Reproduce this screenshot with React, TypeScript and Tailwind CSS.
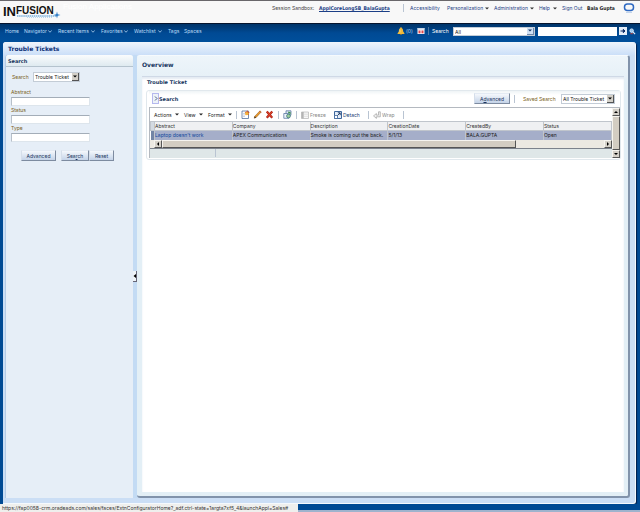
import React from "react";
import clsx from "clsx";

function Caret({ className = "" }: { className?: string }) {
  return (
    <svg viewBox="0 0 4 3" className={clsx("h-[3px] w-1 shrink-0", className)} fill="currentColor" aria-hidden="true">
      <path d="M0 .5h4L2 2.5z" />
    </svg>
  );
}

function Chevron() {
  return (
    <svg viewBox="0 0 4 3" className="h-[3px] w-1 shrink-0" fill="none" stroke="currentColor" aria-hidden="true">
      <path d="M.3.6 2 2.2 3.7.6" strokeWidth=".8" />
    </svg>
  );
}

function GlobalLink({ label, menu, width }: { label: string; menu?: boolean; width: string }) {
  return (
    <a href="#" className={clsx("flex items-center justify-between text-[#1f3f86]", width)}>
      {label}
      {menu && <Caret className="text-[#333]" />}
    </a>
  );
}

function NavLink({ label, menu, width }: { label: string; menu?: boolean; width: string }) {
  return (
    <a href="#" className={clsx("flex items-center justify-between text-[#b9dcf8]", width)}>
      {label}
      {menu && <Chevron />}
    </a>
  );
}

function Divider({ className = "" }: { className?: string }) {
  return <span className={clsx("h-2 w-px shrink-0 bg-[#b9c4d2]", className)} />;
}

function Dropdown({ id, value, width, blue }: { id: string; value: string; width: string; blue?: boolean }) {
  return (
    <span className={clsx("relative flex shrink-0 border border-[#c3ccd6] bg-white", blue ? "h-[9px]" : "h-[10px]", width)}>
      <select id={id} className="w-full appearance-none bg-transparent pl-px text-[5px] leading-[8px] text-[#222] outline-none">
        <option>{value}</option>
      </select>
      <span
        className={clsx(
          "pointer-events-none absolute inset-y-0 right-0 flex w-[7px] items-center justify-center border-r border-b",
          blue ? "border-[#7089ab] bg-[#cfe0f4] text-[#173766]" : "border-[#555] bg-[#d4d0c8] text-black",
        )}
      >
        <Caret />
      </span>
    </span>
  );
}

function PushButton({ children, width }: { children: React.ReactNode; width: string }) {
  return (
    <button
      type="button"
      className={clsx(
        "h-[11px] shrink-0 border border-t-[#e3eaf3] border-r-[#7d8ba0] border-b-[#7d8ba0] border-l-[#d5deea] bg-linear-to-b from-[#f5f8fc] to-[#c4d3e8] text-center leading-[8px] text-[#1c3560]",
        width,
      )}
    >
      {children}
    </button>
  );
}

function Field({ label, id }: { label: string; id: string }) {
  return (
    <div className="flex h-[18px] flex-col">
      <label htmlFor={id} className="h-[9px] leading-[9px] text-[#7a5f1c]">
        {label}
      </label>
      <input id={id} className="h-[9px] w-[79px] border border-[#dde5ec] border-t-[#a3adb8] border-l-[#b7c0ca] bg-white px-px outline-none" />
    </div>
  );
}

function ScrollButton({ path, label }: { path: string; label: string }) {
  return (
    <button type="button" aria-label={label} className="h-2 w-2 shrink-0 border border-[#f6f4ef] border-r-[#555] border-b-[#555] bg-[#d4d0c8]">
      <svg viewBox="0 0 6 6" className="size-full" aria-hidden="true">
        <path d={path} fill="#000" />
      </svg>
    </button>
  );
}

function Logo() {
  return (
    <div className="relative flex h-[17px] w-[58px] items-start font-['Liberation_Sans',sans-serif] font-bold text-[#111]">
      <span className="text-[13px] leading-[16px]">IN</span>
      <span className="text-[10px] leading-[13px]">FUSION</span>
      <svg viewBox="0 0 58 17" className="absolute inset-0 size-full" aria-hidden="true">
        <path d="M14 12h40" stroke="#3f8fd0" strokeDasharray="1.5 .6" />
        <path d="M24 13.5h26" stroke="#9cc8ea" strokeWidth=".7" strokeDasharray="1 1" />
        <path d="M54 7.5l.7 2.800 2.800.7-2.800.7-.7 2.800-.7-2.800-2.800-.7 2.800-.7z" fill="#2477c4" />
      </svg>
    </div>
  );
}

function Bell() {
  return (
    <svg viewBox="0 0 8 8" className="size-2 shrink-0" aria-hidden="true">
      <path d="M4 .3c-.6 0-.9.4-.9.9C2 1.700 1.900 3 1.800 4.400L.6 6.300v.6h6.800v-.6L6.200 4.400C6.100 3 6 1.700 4.900 1.200c0-.5-.3-.9-.9-.9z" fill="#f0b93a" />
      <path d="M3.200 7h1.600v.8H3.200z" fill="#b77a14" />
      <path d="M3 2.500v3" stroke="#fbe29a" strokeWidth=".7" />
    </svg>
  );
}

function Calendar() {
  return (
    <svg viewBox="0 0 8 8" className="size-2 shrink-0" aria-hidden="true">
      <path d="M.5 1h7v6h-7z" fill="#f4f6fa" />
      <path d="M.5 1h7v1.500h-7z" fill="#c9d4e4" />
      <path d="M1.500 3.500h2v2.700h-2zM4.500 3.500h2v2.700h-2z" fill="#e2474a" />
    </svg>
  );
}

function NewIcon() {
  return (
    <svg viewBox="0 0 9 9" className="size-[9px]" aria-hidden="true">
      <path d="M1 1h6.500v7.500H1z" fill="#fff" stroke="#53719f" strokeWidth=".8" />
      <path d="M2 3.500h2M2 5h2M2 6.500h2" stroke="#a9b9d0" strokeWidth=".6" />
      <path d="M6.200.2l.8 1.600 1.800.2-1.300 1.300.3 1.900-1.600-.9-1.700.9.400-1.900-1.300-1.300 1.800-.2z" fill="#cf4e22" />
      <circle cx="5.800" cy="3.600" r="1.700" fill="#f4b43c" />
    </svg>
  );
}

function PencilIcon() {
  return (
    <svg viewBox="0 0 9 9" className="size-[9px]" aria-hidden="true">
      <path d="M7 .8l1.200 1.200-5 5.400-2 .8.600-2z" fill="#e99a2b" stroke="#8a4f16" strokeWidth=".5" />
      <path d="M1.200 8.200l.6-2 1.400 1.200z" fill="#333" />
      <path d="M6.600 1.200 8 2.600" stroke="#c24a3c" strokeWidth=".9" />
    </svg>
  );
}

function DeleteIcon() {
  return (
    <svg viewBox="0 0 9 9" className="size-[9px]" aria-hidden="true">
      <path d="M1.800 1.500l5.400 6.300M7.200 1.500l-5.400 6.300" stroke="#a11a12" strokeWidth="2.200" />
      <path d="M2 1.700l5 5.800M7 1.700 2 7.500" stroke="#e04428" strokeWidth="1.100" />
    </svg>
  );
}

function QueryIcon() {
  return (
    <svg viewBox="0 0 9 9" className="size-[9px]" aria-hidden="true">
      <path d="M3 .8h5v4.400H3z" fill="#dfe8f4" stroke="#4a6a98" strokeWidth=".7" />
      <path d="M.8 3.500h5v4.800h-5z" fill="#eef3fa" stroke="#4a6a98" strokeWidth=".7" />
      <path d="M5 2.200l2.200.3-.4 2" stroke="#2f8b3b" fill="none" />
      <circle cx="5.500" cy="6" r="1.900" fill="#9fd09a" stroke="#2e6a7a" strokeWidth=".7" />
    </svg>
  );
}

function FreezeIcon() {
  return (
    <svg viewBox="0 0 8 8" className="size-2" aria-hidden="true">
      <path d="M.5 1h7v6.500h-7z" fill="#f7f7f7" stroke="#bcbcbc" strokeWidth=".8" />
      <path d="M.5 1h2.200v6.500H.5z" fill="#b4b4b4" />
      <path d="M2.700 3.200h4.800M2.700 5.300h4.800" stroke="#d0d0d0" strokeWidth=".6" />
    </svg>
  );
}

function DetachIcon() {
  return (
    <svg viewBox="0 0 8 8" className="size-2" aria-hidden="true">
      <path d="M.5.5h7v7h-7z" fill="#e3edf9" stroke="#3d669c" />
      <path d="M.5 4.500h3v3h-3z" fill="#fff" stroke="#3d669c" strokeWidth=".8" />
      <path d="M3.500 4.500 6 2M3.800 1.800h2.400v2.400" stroke="#15315c" fill="none" strokeWidth=".9" />
    </svg>
  );
}

function WrapIcon() {
  return (
    <svg viewBox="0 0 8 8" className="size-2" aria-hidden="true">
      <path d="M5.500.8h1.800v5H3.400v1.600L.5 4.900l2.900-2.400v1.600h2.100z" fill="#f0f0f0" stroke="#a2a2a2" strokeWidth=".7" />
    </svg>
  );
}

function IconButton({ label, children }: { label: string; children: React.ReactNode }) {
  return (
    <button type="button" aria-label={label} className="shrink-0">
      {children}
    </button>
  );
}

function MenuButton({ label, width }: { label: string; width: string }) {
  return (
    <button type="button" className={clsx("flex shrink-0 items-center justify-between text-[#222]", width)}>
      {label}
      <Caret />
    </button>
  );
}

const columns = ["Abstract", "Company", "Description", "CreationDate", "CreatedBy", "Status"];
const ticket = ["Laptop doesn't work", "APEX Communications", "Smoke is coming out the back.", "5/1/13", "BALA.GUPTA", "Open"];

function TicketTable() {
  return (
    <div className="flex border-t border-l border-[#b4b9c0] bg-white">
      <div className="min-w-0 flex-1">
        <div className="flex h-[13px] items-center pl-1">
          <div className="flex gap-[5px]">
            <MenuButton label="Actions" width="w-[25px]" />
            <MenuButton label="View" width="w-[19px]" />
            <MenuButton label="Format" width="w-6" />
          </div>
          <Divider className="mx-1" />
          <div className="flex gap-[3px]">
            <IconButton label="Create"><NewIcon /></IconButton>
            <IconButton label="Edit"><PencilIcon /></IconButton>
            <IconButton label="Delete"><DeleteIcon /></IconButton>
          </div>
          <Divider className="mx-1" />
          <IconButton label="Query by example"><QueryIcon /></IconButton>
          <Divider className="mx-1" />
          <button type="button" className="flex w-[29px] shrink-0 items-center gap-px text-[#888]"><FreezeIcon />Freeze</button>
          <button type="button" className="ml-1 flex w-[30px] shrink-0 items-center gap-px text-[#173a72]"><DetachIcon />Detach</button>
          <Divider className="mx-1" />
          <button type="button" className="flex w-[26px] shrink-0 items-center gap-px text-[#888]"><WrapIcon />Wrap</button>
          <Divider className="ml-1" />
        </div>
        <table className="w-full table-fixed border-collapse text-left">
          <thead>
            <tr className="h-[9px] bg-[#eff0f2]">
              <th className="w-1 border border-[#c0c5cc] bg-[#d3dae2] p-0" />
              {columns.map((c, i) => (
                <th key={c} className={clsx("border border-[#c0c5cc] p-0 leading-[8px] font-normal text-[#333]", i === 5 && "w-[68px]")}>
                  {c}
                </th>
              ))}
            </tr>
          </thead>
          <tbody>
            <tr className="h-[9px] bg-[#a5aec9]">
              <td className="bg-[#7385a5] p-0" />
              {ticket.map((v, i) => (
                <td key={v} className="border border-y-0 border-[#c0c5cc] p-0 leading-[8px] text-[#222]">
                  {i === 0 ? <a href="#" className="text-[#12489c]">{v}</a> : v}
                </td>
              ))}
            </tr>
          </tbody>
        </table>
        <div className="flex h-2 bg-[#ece9e2] pl-1">
          <ScrollButton path="M4 1v4L2 3z" label="Scroll left" />
          <div className="flex flex-1">
            <span className="h-2 w-4/5 border border-[#f6f4ef] border-r-[#555] border-b-[#555] bg-[#d3cdc2]" />
          </div>
          <ScrollButton path="M2 1v4l2-2z" label="Scroll right" />
        </div>
        <div className="flex h-[10px] items-center border-t border-[#7c828c] bg-[#dfe7e8]">
          <Divider className="ml-[65px]" />
        </div>
      </div>
      <div className="flex w-2 flex-col bg-[#ece9e2]">
        <ScrollButton path="M1 4h4L3 2z" label="Scroll up" />
        <span className="w-2 flex-1 border border-[#f6f4ef] border-r-[#555] border-b-[#555] bg-[#d3cdc2]" />
        <ScrollButton path="M1 2h4L3 4z" label="Scroll down" />
      </div>
    </div>
  );
}

export default function App() {
  return (
    <div className="flex h-screen flex-col overflow-hidden bg-[#004a94] font-['Inter',sans-serif] text-[5px] leading-[8px] whitespace-nowrap">
      <header className="flex h-[23px] shrink-0 items-start border-t border-[#69676b] bg-[#f8f8f8] pl-[3px]">
        <div className="mt-[3px]"><Logo /></div>
        <span className="mt-[2px] ml-[2px] font-['Liberation_Sans',sans-serif] text-[8px] text-white">Fusion Applications</span>
        <div className="mt-[2px] ml-auto flex items-center pr-[5px]">
          <span className="w-[47px] text-[#444]">Session Sandbox:</span>
          <a href="#" className="w-[78px] font-['DejaVu_Sans_Condensed','DejaVu_Sans',sans-serif] font-bold text-[#1c3f86] underline">ApplCoreLongSB_BalaGupta</a>
          <Divider className="mx-[6px]" />
          <nav className="flex gap-[5px]">
            <GlobalLink label="Accessibility" width="w-8" />
            <GlobalLink label="Personalization" menu width="w-[42px]" />
            <GlobalLink label="Administration" menu width="w-10" />
            <GlobalLink label="Help" menu width="w-[18px]" />
            <GlobalLink label="Sign Out" width="w-[21px]" />
          </nav>
          <b className="mr-[7px] ml-1 w-[29px] font-['DejaVu_Sans_Condensed','DejaVu_Sans',sans-serif] text-[#222]">Bala Gupta</b>
          <svg viewBox="0 0 12 10" className="h-[10px] w-3" aria-hidden="true">
            <rect x="1.500" y="1" width="9" height="6.500" rx="3" fill="none" stroke="#2e69c2" strokeWidth="1.500" />
            <path d="M3 9.300h6" stroke="#b4cbe9" />
          </svg>
        </div>
      </header>

      <div className="flex h-[19px] shrink-0 items-center justify-between border-t border-[#06152e] bg-linear-to-b from-[#003469] via-[#004a94] to-[#004f9b] pr-1 pb-1 pl-[5px]">
        <nav className="flex gap-[6px]">
          <NavLink label="Home" width="w-[13px]" />
          <NavLink label="Navigator" menu width="w-7" />
          <NavLink label="Recent Items" menu width="w-[37px]" />
          <NavLink label="Favorites" menu width="w-[27px]" />
          <NavLink label="Watchlist" menu width="w-7" />
          <NavLink label="Tags" width="w-[10px]" />
          <NavLink label="Spaces" width="w-5" />
        </nav>
        <div className="flex items-center text-[#b9dcf8]">
          <Bell />
          <span className="mx-px w-2">(0)</span>
          <span className="ml-[2px]"><Calendar /></span>
          <Divider className="mx-[3px] opacity-40" />
          <label htmlFor="scope" className="w-[21px] text-white">Search</label>
          <Dropdown id="scope" value="All" width="w-[82px]" blue />
          <input aria-label="Search text" className="ml-[3px] h-[9px] w-[79px] bg-white px-px text-black outline-none" />
          <button type="button" aria-label="Go" className="ml-[2px] size-2 bg-[#e4edf8]">
            <svg viewBox="0 0 8 8" className="size-full" aria-hidden="true">
              <path d="M1.500 4h3M4.300 2.300 6 4 4.300 5.700z" fill="#0c2c66" stroke="#0c2c66" />
            </svg>
          </button>
          <svg viewBox="0 0 8 8" className="ml-[2px] size-[7px]" aria-hidden="true">
            <circle cx="3" cy="3" r="2" fill="#8fc2ee" stroke="#e6f1fb" />
            <path d="M4.500 4.500 7 7" stroke="#e6f1fb" strokeWidth="1.300" />
            <path d="M1.500 6.500h3" stroke="#c8463a" />
          </svg>
        </div>
      </div>

      <main className="mr-1 ml-[3px] flex min-h-0 flex-1 flex-col rounded-t-[3px] rounded-br-[3px] border-r border-b border-[#f5f9fd] bg-[#cbdef5] pr-[5px] pb-[5px] pl-[2px] shadow-[1px_1px_1px_#001f4a]">
        <h1 className="-mr-[5px] -ml-[2px] h-[13px] shrink-0 rounded-t-[3px] bg-linear-to-b from-[#eff5fc] to-[#cbdff8] pl-[5px] font-['DejaVu_Sans',sans-serif] text-[6px] leading-[13px] font-bold text-[#0b2f76]">Trouble Tickets</h1>
        <div className="flex min-h-0 flex-1">
          <aside className="w-32 shrink-0 rounded-t-[3px] border-l border-[#b4cbe6] bg-[#e6eef7]">
            <h2 className="h-3 rounded-t-[3px] border-b border-[#b5c3ce] bg-linear-to-b from-[#fafcfd] to-[#dfeaf0] pl-[2px] font-['DejaVu_Sans',sans-serif] leading-[12px] font-bold text-[#183660]">Search</h2>
            <form className="flex flex-col pt-[5px] pl-[5px]" onSubmit={(e) => e.preventDefault()}>
              <div className="flex items-center pl-px">
                <label htmlFor="kind" className="w-[21px] text-[#7a5f1c]">Search</label>
                <Dropdown id="kind" value="Trouble Ticket" width="w-[47px]" />
              </div>
              <div className="mt-[6px] flex flex-col">
                <Field label="Abstract" id="abstract" />
                <Field label="Status" id="status" />
                <Field label="Type" id="type" />
              </div>
              <div className="mt-2 ml-[10px] flex">
                <PushButton width="w-[35px]">Advanced</PushButton>
                <span className="ml-[5px] flex">
                  <PushButton width="w-7">Sea<u>r</u>ch</PushButton>
                  <PushButton width="w-[25px]">Reset</PushButton>
                </span>
              </div>
            </form>
          </aside>

          <div className="flex w-1 shrink-0 flex-col justify-center bg-[#c3dbf4]">
            <button type="button" aria-label="Collapse pane" className="h-[11px] w-1 border-r border-b border-[#667] bg-[#eef3f8]">
              <svg viewBox="0 0 3 9" className="size-full" aria-hidden="true">
                <path d="M3 2.500v4L.5 4.500z" fill="#000" />
              </svg>
            </button>
          </div>

          <section className="flex min-w-0 flex-1 flex-col rounded-[3px] border-t border-r-2 border-b-2 border-t-[#f6fafd] border-r-[#8193ab] border-b-[#8193ab] bg-linear-to-b from-[#eef5fa] to-[#e3eff6] to-[30px] pr-1 pb-1 pl-[5px]">
            <h2 className="h-5 shrink-0 font-['DejaVu_Sans',sans-serif] text-[6px] leading-[18px] font-bold text-[#183660]">Overview</h2>
            <div className="flex-1 border-t border-[#cfd9e6] bg-white pr-[3px] pl-1 shadow-[inset_0_2px_2px_#e4ebf3]">
              <h3 className="h-[13px] pl-px font-['DejaVu_Sans',sans-serif] leading-[10px] font-bold text-[#183660]">Trouble Ticket</h3>
              <div className="rounded-[3px] border border-[#e1e8ed] bg-white pb-px pl-[2px]">
                <div className="flex h-4 items-center bg-linear-to-b from-[#eff4f6] to-white to-[4px] pr-[5px] pb-px pl-[3px]">
                  <button type="button" aria-label="Expand search" className="flex h-[11px] w-[7px] items-center justify-center border border-[#b5b8ee] bg-[#edf2f8]">
                    <svg viewBox="0 0 4 5" className="h-[5px] w-1" aria-hidden="true">
                      <path d="M1 .5 3 2.500 1 4.500" fill="none" stroke="#243d66" strokeWidth=".8" />
                    </svg>
                  </button>
                  <b className="font-['DejaVu_Sans',sans-serif] text-[#183660]">Search</b>
                  <div className="ml-auto flex items-center">
                    <PushButton width="w-[36px]">A<u>d</u>vanced</PushButton>
                    <Divider className="mr-2 ml-1" />
                    <label htmlFor="saved" className="w-[38px] text-[#7a5f1c]">Saved Search</label>
                    <Dropdown id="saved" value="All Trouble Ticket" width="w-[54px]" />
                  </div>
                </div>
                <TicketTable />
              </div>
            </div>
          </section>
        </div>
      </main>

      <footer className="flex h-2 shrink-0">
        <div className="bg-[#efefed] pr-[10px] pl-[2px] text-[#333]">https://fap0058-crm.oradeads.com/sales/faces/ExtnConfiguratorHome?_adf.ctrl-state=1argta7xf5_4&amp;launchAppl=Sales#</div>
        <div className="flex flex-1 flex-col">
          <div className="flex-1 bg-[#004a94]" />
          <div className="h-[2px] bg-[#9fb3cd]" />
        </div>
      </footer>
    </div>
  );
}
